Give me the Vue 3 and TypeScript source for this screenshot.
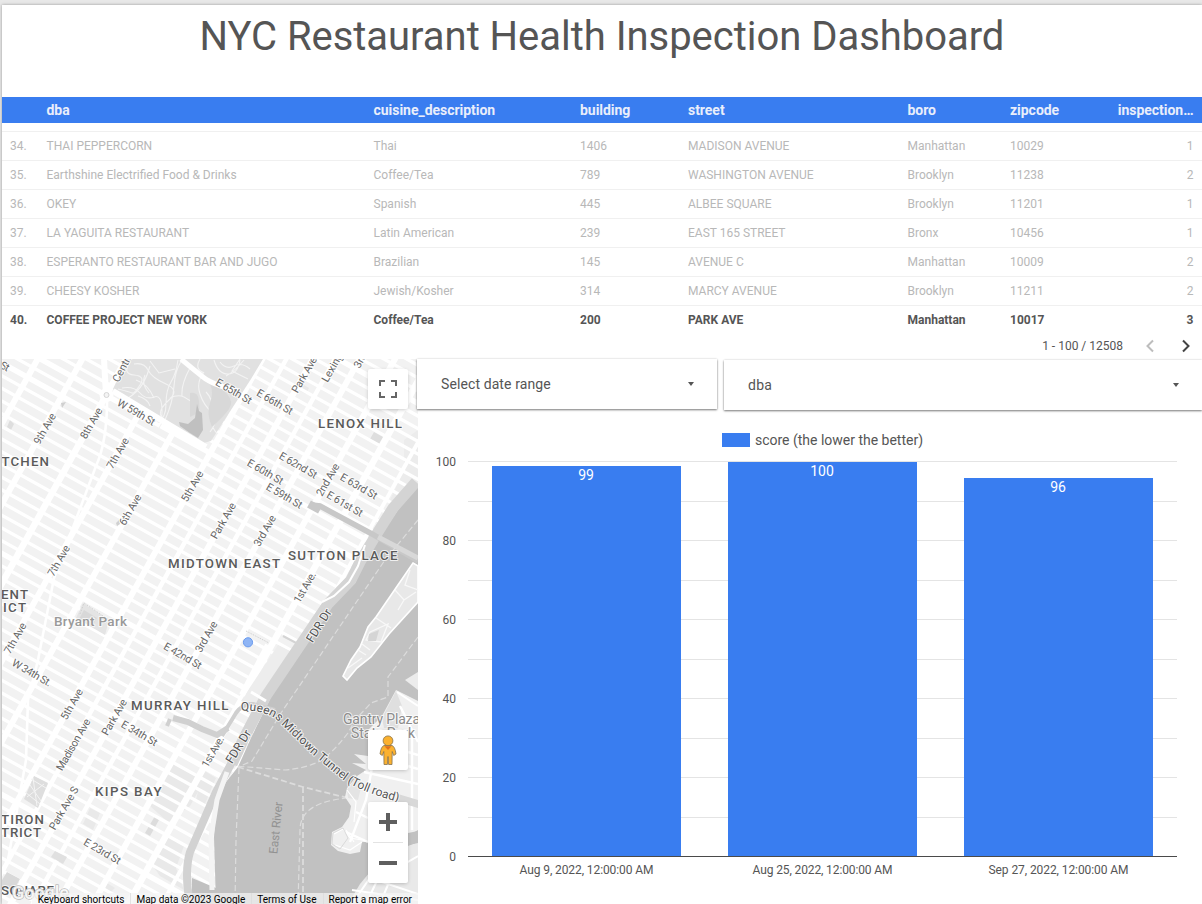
<script setup lang="ts">
interface Row {
  n: number
  dba: string
  cuisine: string
  building: string
  street: string
  boro: string
  zip: string
  count: number
}

const rows: Row[] = [
  { n: 34, dba: 'THAI PEPPERCORN', cuisine: 'Thai', building: '1406', street: 'MADISON AVENUE', boro: 'Manhattan', zip: '10029', count: 1 },
  { n: 35, dba: 'Earthshine Electrified Food & Drinks', cuisine: 'Coffee/Tea', building: '789', street: 'WASHINGTON AVENUE', boro: 'Brooklyn', zip: '11238', count: 2 },
  { n: 36, dba: 'OKEY', cuisine: 'Spanish', building: '445', street: 'ALBEE SQUARE', boro: 'Brooklyn', zip: '11201', count: 1 },
  { n: 37, dba: 'LA YAGUITA RESTAURANT', cuisine: 'Latin American', building: '239', street: 'EAST 165 STREET', boro: 'Bronx', zip: '10456', count: 1 },
  { n: 38, dba: 'ESPERANTO RESTAURANT BAR AND JUGO', cuisine: 'Brazilian', building: '145', street: 'AVENUE C', boro: 'Manhattan', zip: '10009', count: 2 },
  { n: 39, dba: 'CHEESY KOSHER', cuisine: 'Jewish/Kosher', building: '314', street: 'MARCY AVENUE', boro: 'Brooklyn', zip: '11211', count: 2 },
  { n: 40, dba: 'COFFEE PROJECT NEW YORK', cuisine: 'Coffee/Tea', building: '200', street: 'PARK AVE', boro: 'Manhattan', zip: '10017', count: 3 },
]
const selected = 40

const columns = ['', 'dba', 'cuisine_description', 'building', 'street', 'boro', 'zipcode', 'inspection…']

/* Chart */
const bars = [
  { label: 'Aug 9, 2022, 12:00:00 AM', value: 99, w: 134 },
  { label: 'Aug 25, 2022, 12:00:00 AM', value: 100, w: 140 },
  { label: 'Sep 27, 2022, 12:00:00 AM', value: 96, w: 140 },
]
const yOf = (v: number) => 856.5 - v * 3.945
const gridY = (v: number) => Math.floor(856.5 - v * 3.95) + 0.5
const barX = (i: number) => 492 + i * 236
const ticks = [0, 20, 40, 60, 80, 100]
const gridValues = [10, 20, 30, 40, 50, 60, 70, 80, 90, 100]

/* Street grid, in a frame turned 29 degrees: u runs across town, v downtown */
const avenues = [
  { u: 168, w: 5 }, { u: 207, w: 6 }, { u: 246, w: 6 }, { u: 284.5, w: 6.5 }, { u: 322, w: 6 },
  { u: 361, w: 6 }, { u: 403.5, w: 6 }, { u: 424.5, w: 4.5 }, { u: 447.5, w: 6 }, { u: 467, w: 4.5 },
  { u: 488.5, w: 6 }, { u: 519.5, w: 6 }, { u: 550.3, w: 6.5 }, { u: 580, w: 4 },
]
const major = [14, 23, 34, 42, 57, 59, 72]
const streets: { v: number; w: number }[] = []
for (let s = 8; s <= 84; s++) {
  streets.push({ v: 294.4 + (59 - s) * 11.1, w: major.includes(s) ? 5.4 : 3.3 })
}

interface RoadLabel { t: string; x: number; y: number; a: number; w: number }
const roadLabels: RoadLabel[] = [
  { t: 'St', x: 5, y: 366, a: 28, w: 9 },
  { t: '9th Ave', x: 44.5, y: 428.5, a: -60, w: 34 },
  { t: '8th Ave', x: 91, y: 423, a: -60, w: 34 },
  { t: '7th Ave', x: 117.5, y: 453, a: -60, w: 34 },
  { t: '6th Ave', x: 130, y: 509.5, a: -60, w: 34 },
  { t: '5th Ave', x: 192, y: 486, a: -60, w: 34 },
  { t: '7th Ave', x: 58.5, y: 560.5, a: -60, w: 34 },
  { t: '7th Ave', x: 15, y: 638, a: -60, w: 34 },
  { t: '5th Ave', x: 71.5, y: 704, a: -60, w: 34 },
  { t: 'Park Ave', x: 223, y: 520.5, a: -60, w: 40 },
  { t: 'Park Ave', x: 304, y: 374.5, a: -60, w: 40 },
  { t: 'Park Ave', x: 114, y: 717, a: -60, w: 40 },
  { t: 'Park Ave S', x: 63.5, y: 808, a: -60, w: 48 },
  { t: 'Madison Ave', x: 73, y: 744.5, a: -60, w: 58 },
  { t: '3rd Ave', x: 264.5, y: 530.5, a: -60, w: 34 },
  { t: '3rd Ave', x: 206, y: 636.5, a: -60, w: 34 },
  { t: '2nd Ave', x: 327.5, y: 479.5, a: -60, w: 36 },
  { t: '1st Ave.', x: 304.5, y: 587, a: -60, w: 34 },
  { t: '1st Ave.', x: 212.5, y: 751.5, a: -60, w: 34 },
  { t: 'W 59th St', x: 136.5, y: 412, a: 30, w: 42 },
  { t: 'E 65th St', x: 234, y: 391, a: 30, w: 40 },
  { t: 'E 66th St', x: 275, y: 401.5, a: 30, w: 40 },
  { t: 'E 62nd St', x: 298.5, y: 465, a: 30, w: 42 },
  { t: 'E 60th St', x: 265.5, y: 471.5, a: 30, w: 40 },
  { t: 'E 59th St', x: 284.5, y: 495.5, a: 30, w: 40 },
  { t: 'E 63rd St', x: 359, y: 486, a: 30, w: 41 },
  { t: 'E 61st St', x: 345, y: 503.5, a: 30, w: 40 },
  { t: 'E 42nd St', x: 183, y: 655.5, a: 30, w: 42 },
  { t: 'W 34th St.', x: 32, y: 672.5, a: 30, w: 44 },
  { t: 'E 34th St', x: 139.5, y: 733, a: 30, w: 40 },
  { t: 'E 23rd St', x: 102.5, y: 851, a: 30, w: 41 },
]

interface AreaLabel { t: string; x: number; y: number; w: number }
const areaLabels: AreaLabel[] = [
  { t: 'LENOX HILL', x: 318, y: 427.5, w: 84 },
  { t: 'TCHEN', x: 1.5, y: 465.5, w: 47.5 },
  { t: 'MIDTOWN EAST', x: 168, y: 567.5, w: 112 },
  { t: 'SUTTON PLACE', x: 288, y: 559.5, w: 109.5 },
  { t: 'ENT', x: 1, y: 598.5, w: 27 },
  { t: 'ICT', x: 3, y: 611.5, w: 23 },
  { t: 'MURRAY HILL', x: 131, y: 709.5, w: 97.5 },
  { t: 'KIPS BAY', x: 95, y: 795.5, w: 66.5 },
  { t: 'TIRON', x: 1, y: 823.5, w: 43 },
  { t: 'TRICT', x: 1, y: 836.5, w: 40 },
  { t: 'SQUARE', x: 1, y: 894.5, w: 53 },
]
</script>

<template>
  <div class="page">
    <main class="sheet">
      <h1 class="title">NYC Restaurant Health Inspection Dashboard</h1>

      <section class="table">
        <div class="tr head">
          <span v-for="c in columns" :key="c">{{ c }}</span>
        </div>
        <div class="body">
          <div v-for="r in rows" :key="r.n" class="tr row" :class="{ on: r.n === selected }">
            <span>{{ r.n }}.</span>
            <span>{{ r.dba }}</span>
            <span>{{ r.cuisine }}</span>
            <span>{{ r.building }}</span>
            <span>{{ r.street }}</span>
            <span>{{ r.boro }}</span>
            <span>{{ r.zip }}</span>
            <span>{{ r.count }}</span>
          </div>
        </div>
        <div class="pager">
          <span>1 - 100 / 12508</span>
          <svg class="prev" width="10" height="14" viewBox="0 0 10 14"><path d="M8 1.5 2.5 7 8 12.5" /></svg>
          <svg class="next" width="10" height="14" viewBox="0 0 10 14"><path d="M2 1.5 7.5 7 2 12.5" /></svg>
        </div>
      </section>

      <div class="lower">
        <section class="map">
          <svg class="tiles" width="416" height="545" viewBox="2 359 416 545">
            <rect x="2" y="359" width="416" height="545" fill="#f2f2f2" />
            <!-- larger lots -->
            <g fill="#e9e9e9">
              <path d="M173 764 204 781 190 806 168 822 150 806Z" />
              <path d="M203 770 216 778 204 806 196 800Z" />
              <path d="M166 836 184 846 176 868 184 890 160 876 150 862Z" />
              <path d="M90 808 100 813 93 830 83 824Z" />
              <path d="M155 816 159 820 150 836 145 833Z" fill="#dcdcdc" />
              <path d="M374 432 383 437 379 444 370 439Z" fill="#dedede" />
              <path d="M10 420 14 424 11 430 7 427Z" fill="#dedede" />
              <path d="M404 440 418 430V490L396 505 390 500 404 470Z" fill="#ececec" />
              <path d="M111 850 117 854 112 862 105 858Z" />
              <path d="M107 883 115 888 110 893 104 890Z" />
              <path d="M302 384 309 388 306 394 298 390Z" />
            </g>
            <g transform="rotate(29)" stroke="#fff">
              <line v-for="s in streets" :key="s.v" x1="100" x2="620" :y1="s.v" :y2="s.v" :stroke-width="s.w" />
              <line v-for="a in avenues" :key="a.u" y1="80" y2="900" :x1="a.u" :x2="a.u" :stroke-width="a.w" />
            </g>
            <!-- Broadway -->
            <path d="M104 359 107 392Q108 440 96 466L54 578 38 660 28 700 26 760 8 860" fill="none" stroke="#fff" stroke-width="2.600" />
            <path d="M104 359 106 395" stroke="#fff" stroke-width="6" />

            <!-- Central Park -->
            <path d="M127 359 113 389 200 444 211 441 251 379 263 359Z" fill="#e1e1e1" />
            <g fill="none" stroke="#f3f3f3" stroke-width="1.100">
              <path d="M130 362q-8 12 4 13t6 10-8 8-14-4M122 388q12-2 18 5t14 4 8 14-6 9M134 364q10-2 14 6t18 14 3 16-8 16-2 12M178 360q-2 14-7 22t-5 22-8 18M150 366q-5 18-14 26t-10 6M170 398q8-4 14-1t13 9M165 420q8-18 9-34t8-26M150 361l9 12 16-4M200 359q-6 10 4 14M190 368q-9 16-8 28M204 372q-8 10-4 22t12 18-2 20M206 392q8 8 6 22t6 20M214 360q4 14 14 14t12-14M220 362q6 8 14 4t16 3M226 376q8-4 18-16M240 359l-8 12 16 8M136 380q12 4 18 18M145 375q-4 9 4 18M138 396q10 3 12 10" />
            </g>
            <path d="M210 384q10 2 17 10t2 15-17 18q-6-14-2-24t0-19Z" fill="#d8d8d8" />
            <path d="M190 393q8-2 9 8t-1 12l-8 4Z" fill="#d8d8d8" />
            <path d="M197 404 199 411 202 413 203 430 198 438 190 433 180 426 179 422 188 424 195 418Z" fill="#c0c0c0" />
            <path d="M181 359Q193 369 203 377T238 391" fill="none" stroke="#fff" stroke-width="5" />
            <path d="M113 391 206 447" stroke="#fff" stroke-width="6" />
            <circle cx="106.500" cy="395" r="7" fill="#fff" />
            <circle cx="106.500" cy="395" r="2.500" fill="#f4f4f4" stroke="#d5d5d5" />

            <!-- small parks -->
            <path d="M83 603 109 620 105 635 76 618Z" fill="#e4e4e4" />
            <path d="M84 610 97 618 92 627 79 619Z" fill="#d8d8d8" />
            <path d="M80 614 84 603 109 620" fill="none" stroke="#d0d0d0" stroke-dasharray="1.500 1.500" />
            <path d="M34 776 48 783 38 808 24 799Z" fill="#dedede" />
            <path d="M27 797 44 784M30 785 41 801M33 778 37 806M25 792 40 804M31 779 46 788" stroke="#f4f4f4" fill="none" />
            <path d="M55 851 67 857 63 864 51 857Z" fill="#e0e0e0" />
            <path d="M7 872 20 879 12 893 2 890V880Z" fill="#d9d9d9" />
            <path d="M61 403 66 402 62 408ZM116 523 119 520 120 524 117 526Z" fill="#d0d0d0" />
            <path d="M246 631 269 643" stroke="#ccc" stroke-dasharray="1 1" />

            <!-- United Nations strip -->
            <path d="M278 645 296 654 263 709 241 701Z" fill="#ededed" />
            <path d="M283 636 298 644 306 636" fill="none" stroke="#d4d4d4" stroke-width="2" />
            <path d="M268 645 242 695" stroke="#fff" stroke-width="6" />

            <!-- river -->
            <path d="M418 485 398 510 381 535 365 560 355 583 331 607 271 697 251 738 238 767 226 782 217 800 214 837 216 904H418Z" fill="#c1c1c1" />
            <path d="M192 878 216 888V904H192Z" fill="#c1c1c1" />
            <path d="M416 482 393 508 376 535 360 562 351 580 328 604 266 696 244 738 232 764" fill="none" stroke="#d4d4d4" stroke-width="11" />
            <path d="M244 738 230 766 216 792 206 815 190 852Q184 872 190 904" fill="none" stroke="#d2d2d2" stroke-width="8" />
            <path d="M227 772 217 800 211 837 212 890" fill="none" stroke="#f4f4f4" stroke-width="5" />
            <path d="M365 545 358 566 349 582 334 596 322 602" fill="none" stroke="#fff" stroke-width="2" />
            <path d="M312 505 320 506 372 534 418 561" fill="none" stroke="#c8c8c8" stroke-width="5.500" />
            <path d="M378 537 418 558" stroke="#d8d8d8" stroke-width="5" />
            <path d="M309 504 320 510" stroke="#c8c8c8" stroke-width="8" />

            <!-- ferry lines -->
            <g fill="none" stroke="#dcdcdc" stroke-width="1.200" stroke-dasharray="6 3">
              <path d="M418 520 385 560 281 713 252 761 238 767" />
              <path d="M418 637 388 677V697L371 703 355 720 348 733Q330 756 318 762T285 770L235 766" />
              <path d="M238 767 303 787 348 798" stroke-width="1.800" />
              <path d="M303 787V904" stroke-width="1.800" />
              <path d="M239 768 236 840 235 904" />
              <path d="M348 798Q300 802 300 830L298 904" />
            </g>

            <!-- Roosevelt Island -->
            <path d="M413 563 418 566V602L389 634 371 657 357 668 347 680 343 676 351 660 360 647 368 627 376 617Z" fill="#e8e8e8" stroke="#fff" stroke-width="1.600" />
            <path d="M376 618 391 628M370 632 388 624 381 642 366 640ZM358 650 366 655M395 590 404 600 416 592M404 600 398 610M410 570 405 585 418 590M348 668 362 658M362 644 370 650" fill="none" stroke="#f8f8f8" stroke-width="1.300" />
            <path d="M369 634 379 630 376 641 368 641Z" fill="#d5d5d5" />

            <!-- Queens -->
            <path d="M418 672 405 680 418 690Z" fill="#ececec" />
            <path d="M396 690 418 701V830L398 842H362L360 852 350 854 338 851 331 845 332 832 342 827 349 817 351 806 345 797 347 788 357 776 366 770 352 763 366 764 354 754 368 756V730L382 716Z" fill="#f0f0f0" />
            <path d="M396 691 382 718 384 728 398 728 402 706Z" fill="#dfdfdf" />
            <path d="M397 692 418 706" stroke="#fff" stroke-width="2" />
            <path d="M400 687 418 697" stroke="#c1c1c1" stroke-width="5" />
            <g fill="none" stroke="#fff" stroke-width="2.400">
              <path d="M400 706 418 742M404 722 418 718M364 772 418 784M360 788 368 790M408 752 418 755M408 766 418 769M412 730V830M372 768 366 800 350 842M356 812 368 818M346 832 368 842" />
            </g>
            <path d="M347 790 357 776 362 784 358 800 348 798Z" fill="#e4e4e4" />
            <path d="M334 834 343 829 350 838 362 840M335 845 350 850 362 842M346 830 354 842M347 790 356 802 354 822" fill="none" stroke="#fff" stroke-width="1.200" />
            <path d="M333 833 343 828 348 838 340 849 332 844Z" fill="none" stroke="#dadada" />
            <path d="M348 904 360 884 375 866 398 850 418 842V904Z" fill="#e9e9e9" />
            <path d="M352 904 376 869M366 904 382 870M380 904 394 870 418 856M352 890 418 900M370 878 418 894" fill="none" stroke="#fff" stroke-width="2" />
            <path d="M398 835 418 831V843L404 846Z" fill="#c1c1c1" />
            <path d="M398 794 418 800V808L398 802Z" fill="#d8d8d8" />

            <!-- tunnel approach -->
            <path d="M222 736 236 713Q243 703 253 704L275 710" fill="none" stroke="#cfcfcf" stroke-width="4" />
            <path d="M173 718 188 722 202 729 217 735 228 728" fill="none" stroke="#d0d0d0" stroke-width="6" />
            <path d="M167 726 170 719" stroke="#d0d0d0" stroke-width="4" />
            <path d="M251 692 266 701" stroke="#fff" stroke-width="3" />

            <g class="road">
              <text
                v-for="(l, i) in roadLabels"
                :key="i"
                :transform="`translate(${l.x} ${l.y}) rotate(${l.a})`"
                y="4"
                text-anchor="middle"
                :textLength="l.w"
              >{{ l.t }}</text>
              <text transform="translate(115 381) rotate(-62)" y="4">Central Park W</text>
              <text transform="translate(324 381) rotate(-60)" y="4">Lexington Ave</text>
              <text transform="translate(356 367) rotate(-60)" y="4">3rd Ave</text>
            </g>
            <g class="road big">
              <text transform="translate(319 625.500) rotate(-58)" y="4" text-anchor="middle" textLength="37">FDR Dr</text>
              <text transform="translate(238.500 746.500) rotate(-58)" y="4" text-anchor="middle" textLength="37">FDR Dr</text>
              <path id="tunnel" d="M241 711Q260 709 276 719L312 754 341 778Q357 791 402 803" fill="none" />
              <text textLength="187"><textPath href="#tunnel">Queens Midtown Tunnel (Toll road)</textPath></text>
            </g>
            <text class="river" transform="translate(276 828) rotate(-84)" y="4" text-anchor="middle" textLength="52">East River</text>
            <g class="poi">
              <text class="park" x="54" y="626" textLength="73">Bryant Park</text>
              <text x="343" y="724" textLength="77">Gantry Plaza</text>
              <text x="351" y="738" textLength="64">State Park</text>
            </g>
            <g class="area">
              <text v-for="l in areaLabels" :key="l.t" :x="l.x" :y="l.y" :textLength="l.w">{{ l.t }}</text>
            </g>
            <circle cx="248" cy="642.300" r="4.600" fill="#8fb5f5" stroke="#6b9bee" />
            <text class="google" x="12" y="899" textLength="57">Google</text>
          </svg>

          <button class="ctl full" aria-label="Toggle fullscreen view">
            <svg width="18" height="18" viewBox="0 0 18 18"><path d="M1 6V1h5M12 1h5v5M17 12v5h-5M6 17H1v-5" fill="none" stroke="#666" stroke-width="2" /></svg>
          </button>
          <button class="ctl peg" aria-label="Street View">
            <svg width="18" height="31" viewBox="0 0 18 31">
              <path d="M5 10.500Q2 11.500 1 19L3.300 20.500 4.800 16.500 5 29.500H8.400L9 21.500 9.600 29.500H13L13.200 16.500 14.700 20.500 17 19Q16 11.500 13 10.500Z" fill="#fbb12f" stroke="#85724f" stroke-width=".8" />
              <path d="M5.500 11.300H12.500L9 15Z" fill="#e2711d" />
              <circle cx="9" cy="5.800" r="4.900" fill="#fbb12f" stroke="#85724f" stroke-width=".8" />
            </svg>
          </button>
          <div class="ctl zoom">
            <svg width="40" height="81" viewBox="0 0 40 81">
              <path d="M11 20H29M20 11V29M11 61H29" stroke="#5f5f5f" stroke-width="4" />
              <path d="M5 40.500H35" stroke="#e3e3e3" />
            </svg>
          </div>
          <div class="legal">
            <span>Keyboard shortcuts</span>
            <span>Map data ©2023 Google</span>
            <span>Terms of Use</span>
            <span>Report a map error</span>
          </div>
        </section>

        <section class="right">
          <div class="filters">
            <div class="filter date"><span>Select date range</span><i class="caret"></i></div>
            <div class="filter dim"><span>dba</span><i class="caret"></i></div>
          </div>
          <svg class="chart" width="784" height="493" viewBox="418 411 784 493">
            <rect x="722" y="433" width="28" height="14" fill="#397df0" />
            <text class="legend" x="755" y="445" textLength="168">score (the lower the better)</text>
            <line v-for="g in gridValues" :key="g" x1="468" x2="1177" :y1="gridY(g)" :y2="gridY(g)" stroke="#e4e4e4" />
            <text v-for="t in ticks" :key="t" class="axis" x="456" :y="gridY(t) + 4.500" text-anchor="end">{{ t }}</text>
            <g v-for="(b, i) in bars" :key="b.label">
              <rect :x="barX(i)" :y="Math.round(yOf(b.value))" width="189" :height="856 - Math.round(yOf(b.value))" fill="#397df0" />
              <text class="value" :x="barX(i) + 94" :y="Math.round(yOf(b.value)) + 14" text-anchor="middle">{{ b.value }}</text>
              <text class="axis" :x="barX(i) + 94.500" y="874" text-anchor="middle" :textLength="b.w">{{ b.label }}</text>
            </g>
            <line x1="468" x2="1177" y1="856.500" y2="856.500" stroke="#4a4a4a" />
          </svg>
        </section>
      </div>
    </main>
  </div>
</template>

<style>
body {
  margin: 0;
  overflow: hidden;
}
</style>

<style scoped>
.page {
  box-sizing: border-box;
  width: 1202px;
  height: 904px;
  padding: 5px 0 0 2px;
  overflow: hidden;
  background: #e8e8e8;
  font-family: Roboto, "Liberation Sans", sans-serif;
  color: #555;
}
.sheet {
  height: 899px;
  background: #fff;
  box-shadow: 0 0 3px rgba(0, 0, 0, 0.35);
}
.title {
  margin: 0;
  height: 92px;
  box-sizing: border-box;
  padding-top: 7px;
  font-size: 40px;
  line-height: 50px;
  font-weight: 400;
  letter-spacing: -0.03px;
  text-align: center;
  white-space: nowrap;
  color: #555;
}
.table {
  height: 262px;
}
.tr {
  display: grid;
  grid-template-columns: 36.5px 327px 206.5px 108px 219.500px 102.500px 92px 91.500px;
  padding-left: 8px;
  box-sizing: border-box;
}
.tr span:last-child {
  text-align: right;
}
.head {
  height: 26px;
  background: #397df0;
  color: #e9eefb;
  font-size: 14px;
  line-height: 26px;
  font-weight: 700;
  letter-spacing: -0.03px;
}
.body {
  padding-top: 8px;
}
.row {
  height: 29px;
  border-top: 1px solid #f0f0f0;
  font-size: 12px;
  line-height: 29px;
  letter-spacing: 0;
  color: #b8b8b8;
}
.row.on {
  color: #555;
  font-weight: 700;
}
.pager {
  display: flex;
  align-items: center;
  justify-content: flex-end;
  height: 14px;
  margin-top: 5px;
  padding-right: 11px;
  font-size: 12px;
}
.pager svg {
  fill: none;
  stroke: #444;
  stroke-width: 2;
}
.pager .prev {
  margin-left: 22px;
  stroke: #bdbdbd;
}
.pager .next {
  margin-left: 26px;
}
.lower {
  display: flex;
  height: 545px;
}
.map {
  position: relative;
  flex: none;
  width: 416px;
  overflow: hidden;
}
.tiles {
  display: block;
}
.tiles text {
  paint-order: stroke;
  stroke: rgba(255, 255, 255, 0.75);
  stroke-width: 2px;
  stroke-linejoin: round;
}
.road text {
  font-size: 10.800px;
  fill: #666;
}
.big text {
  font-size: 12px;
  fill: #555;
}
.tiles .river {
  font-size: 12px;
  fill: #929292;
  stroke: none;
}
.poi text {
  font-size: 14px;
  fill: #8c8c8c;
}
.poi .park {
  font-size: 13.500px;
  font-weight: 500;
  fill: #999;
}
.area text {
  font-size: 13.300px;
  font-weight: 500;
  fill: #5a5a5a;
}
.tiles .google {
  font-size: 18px;
  font-weight: 500;
  fill: rgba(255, 255, 255, 0.85);
  stroke: #bdbdbd;
  stroke-width: 1.500px;
}
.ctl {
  position: absolute;
  right: 10px;
  display: flex;
  align-items: center;
  justify-content: center;
  width: 40px;
  height: 40px;
  padding: 0;
  border: 0;
  border-radius: 2px;
  background: #fff;
  box-shadow: 0 1px 4px -1px rgba(0, 0, 0, 0.3);
}
.full {
  top: 10px;
}
.peg {
  top: 371px;
}
.zoom {
  top: 443px;
  height: 81px;
}
.legal {
  position: absolute;
  right: 0;
  bottom: -3px;
  display: flex;
  height: 14px;
  font-size: 10px;
  line-height: 14px;
  color: #000;
  white-space: nowrap;
}
.legal span {
  padding: 0 6px;
  background: rgba(245, 245, 245, 0.7);
}
.legal span + span {
  border-left: 1px solid rgba(220, 220, 220, 0.8);
  padding-left: 5px;
}
.right {
  flex: 1;
  min-width: 0;
}
.filters {
  display: flex;
  height: 52px;
  margin-left: -1px;
}
.filter {
  display: flex;
  align-items: center;
  justify-content: space-between;
  position: relative;
  box-sizing: border-box;
  height: 50px;
  padding: 0 23px 0 24px;
  background: #fff;
  box-shadow: 0 1px 2px rgba(0, 0, 0, 0.5), 0 0 2px rgba(0, 0, 0, 0.12);
  font-size: 14px;
}
.date {
  width: 300px;
  letter-spacing: 0.1px;
}
.dim {
  width: 478px;
  margin: 1px 0 0 7px;
  letter-spacing: 0.300px;
}
.caret {
  border: 3.500px solid transparent;
  border-top: 4px solid #555;
  border-bottom: 0;
}
.chart {
  display: block;
}
.chart .legend {
  font-size: 14px;
  fill: #555;
}
.axis {
  font-size: 12px;
  fill: #555;
}
.value {
  font-size: 14px;
  fill: #fff;
}
</style>
